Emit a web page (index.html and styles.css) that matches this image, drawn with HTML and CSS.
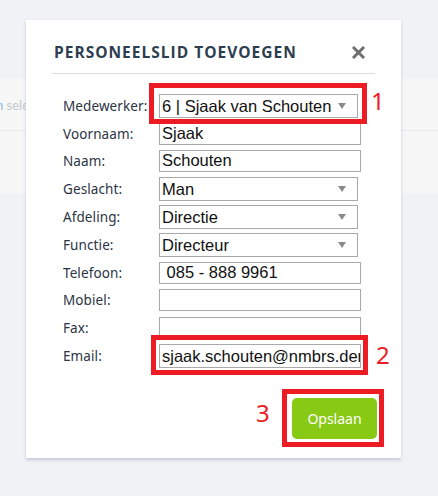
FILE: index.html
```html
<!DOCTYPE html>
<html>
<head>
<meta charset="utf-8">
<link rel="stylesheet" href="styles.css">
</head>
<body>
<div class="page">
  <div class="band">
    <div class="band-top"><span class="hint"><span class="hint-blue">n</span> selectie</span></div>
    <div class="band-bottom"></div>
  </div>
</div>

<div class="modal">
  <div class="modal-header">
    <h2 class="modal-title">PERSONEELSLID TOEVOEGEN</h2>
    <svg class="close" width="13" height="13" viewBox="0 0 13 13" aria-label="Sluiten">
      <path d="M2 2 L11 11 M11 2 L2 11" stroke="#6e6e6e" stroke-width="3" stroke-linecap="square"/>
    </svg>
  </div>
  <div class="form">
    <div class="row"><label class="lbl">Medewerker:</label><div class="select wide"><span>6 | Sjaak van Schouten</span><i class="caret"></i></div></div>
    <div class="row"><label class="lbl">Voornaam:</label><div class="input">Sjaak</div></div>
    <div class="row"><label class="lbl">Naam:</label><div class="input">Schouten</div></div>
    <div class="row"><label class="lbl">Geslacht:</label><div class="select"><span>Man</span><i class="caret"></i></div></div>
    <div class="row"><label class="lbl">Afdeling:</label><div class="select"><span>Directie</span><i class="caret"></i></div></div>
    <div class="row"><label class="lbl">Functie:</label><div class="select"><span>Directeur</span><i class="caret"></i></div></div>
    <div class="row"><label class="lbl">Telefoon:</label><div class="input">&nbsp;085 - 888 9961</div></div>
    <div class="row"><label class="lbl">Mobiel:</label><div class="input"></div></div>
    <div class="row"><label class="lbl">Fax:</label><div class="input"></div></div>
    <div class="row"><label class="lbl">Email:</label><div class="input email">sjaak.schouten@nmbrs.demo</div></div>
  </div>
  <div class="modal-footer">
    <button class="btn">Opslaan</button>
  </div>

  <div class="mark mark-1"></div><span class="num num-1">1</span>
  <div class="mark mark-2"></div><span class="num num-2">2</span>
  <div class="mark mark-3"></div><span class="num num-3">3</span>
</div>
</body>
</html>
```
FILE: styles.css
```css
* { box-sizing: border-box; }
html, body { margin: 0; padding: 0; }
body {
  width: 438px;
  height: 496px;
  background: #f1f2f5;
  font-family: "Noto Sans", "Liberation Sans", sans-serif;
  overflow: hidden;
  position: relative;
}
.page { padding-top: 79px; }
.band { background: #f7f7f8; }
.band-top {
  height: 52px;
  border-bottom: 1px solid #ebebed;
  display: flex;
  align-items: center;
}
.band-bottom { height: 62px; }
.hint {
  margin-left: -4px;
  font-size: 13px;
  color: #c4c7cc;
  font-family: "Lato", sans-serif;
}
.hint-blue { color: #8fb8dd; }

.modal {
  position: absolute;
  left: 26px;
  top: 20px;
  width: 375px;
  height: 438px;
  background: #fff;
  box-shadow: 0 2px 3px rgba(140, 155, 180, 0.45);
  padding: 0 26px;
}
.modal-header {
  height: 54px;
  display: flex;
  align-items: flex-end;
  justify-content: space-between;
  padding: 0 0 11px 2px;
  border-bottom: 1px solid #dcdcdc;
}
.modal-title {
  margin: 0;
  font-family: "Open Sans", sans-serif;
  font-weight: 700;
  font-size: 15.5px;
  letter-spacing: 1px;
  color: #2c3e50;
  line-height: 20px;
}
.close {
  display: block;
  margin: 0 10px 3px 0;
}

.form { padding: 18px 0 0 11px; }
.row {
  height: 27.8px;
  display: flex;
  align-items: center;
}
.lbl {
  width: 96px;
  font-size: 13.5px;
  color: #2b3444;
  letter-spacing: 0.1px;
}
.input, .select {
  height: 22px;
  width: 202px;
  border: 1px solid #a9a9a9;
  font-family: "Liberation Sans", Arial, sans-serif;
  font-size: 16.5px;
  color: #111;
  line-height: 19px;
  padding: 0 2px;
  white-space: nowrap;
  overflow: hidden;
}
.select {
  width: 199px;
  height: 24px;
  line-height: 22px;
  display: flex;
  justify-content: space-between;
  align-items: center;
}
.caret {
  width: 0; height: 0;
  border-left: 4px solid transparent;
  border-right: 4px solid transparent;
  border-top: 6px solid #8a8a8a;
  margin-right: 9px;
}
.email { height: 24px; line-height: 22px; }

.modal-footer {
  position: absolute;
  left: 0; right: 0; bottom: 19px;
  display: flex;
  justify-content: flex-end;
  padding-right: 24px;
}
.btn {
  width: 85px;
  height: 41px;
  background: #88c914;
  border: none;
  border-radius: 5px;
  color: #fff;
  font-family: "Noto Sans", sans-serif;
  font-size: 14px;
}

.mark {
  position: absolute;
  border: 5px solid #ed1c24;
}
.mark-1 { left: 123px; top: 63px; width: 218px; height: 41px; }
.mark-2 { left: 125px; top: 315px; width: 217px; height: 40px; }
.mark-3 { left: 256px; top: 369px; width: 102px; height: 58px; }
.num {
  position: absolute;
  color: #ed1c24;
  font-family: "Noto Sans", sans-serif;
  font-size: 24px;
  line-height: 24px;
}
.num-1 { left: 345px; top: 69px; }
.num-2 { left: 350px; top: 323px; }
.num-3 { left: 230px; top: 381px; }
```
